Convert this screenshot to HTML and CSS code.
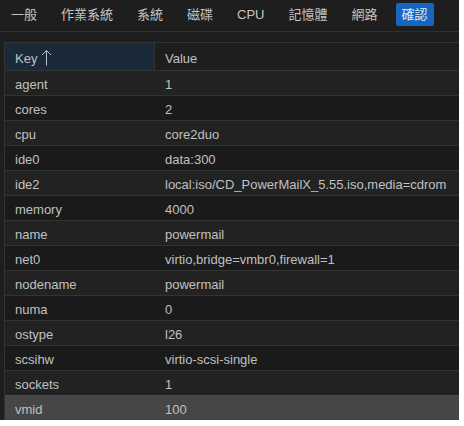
FILE: index.html
```html
<!DOCTYPE html>
<html lang="zh-Hant">
<head>
  <meta charset="UTF-8">
  <meta name="viewport" content="width=device-width, initial-scale=1.0">
  <title>確認</title>
  <link rel="stylesheet" href="styles.css">
</head>
<body>
  <div class="wizard">
    <div class="tabs">
      <div class="tab">一般</div>
      <div class="tab">作業系統</div>
      <div class="tab">系統</div>
      <div class="tab">磁碟</div>
      <div class="tab">CPU</div>
      <div class="tab">記憶體</div>
      <div class="tab">網路</div>
      <div class="tab active">確認</div>
    </div>

    <div class="grid">
      <div class="grid-head">
        <div class="col-key sorted">Key
          <svg class="arrow" width="11" height="17" viewBox="0 0 11 17">
            <path d="M5.5 1.5V16.5M1 6L5.5 1.5L10 6" fill="none" stroke="#b4bcc4" stroke-width="1"/>
          </svg>
        </div>
        <div class="col-value">Value</div>
      </div>
      <div class="row"><div class="col-key">agent</div><div class="col-value">1</div></div>
      <div class="row"><div class="col-key">cores</div><div class="col-value">2</div></div>
      <div class="row"><div class="col-key">cpu</div><div class="col-value">core2duo</div></div>
      <div class="row"><div class="col-key">ide0</div><div class="col-value">data:300</div></div>
      <div class="row"><div class="col-key">ide2</div><div class="col-value">local:iso/CD_PowerMailX_5.55.iso,media=cdrom</div></div>
      <div class="row"><div class="col-key">memory</div><div class="col-value">4000</div></div>
      <div class="row"><div class="col-key">name</div><div class="col-value">powermail</div></div>
      <div class="row"><div class="col-key">net0</div><div class="col-value">virtio,bridge=vmbr0,firewall=1</div></div>
      <div class="row"><div class="col-key">nodename</div><div class="col-value">powermail</div></div>
      <div class="row"><div class="col-key">numa</div><div class="col-value">0</div></div>
      <div class="row"><div class="col-key">ostype</div><div class="col-value">l26</div></div>
      <div class="row"><div class="col-key">scsihw</div><div class="col-value">virtio-scsi-single</div></div>
      <div class="row"><div class="col-key">sockets</div><div class="col-value">1</div></div>
      <div class="row selected"><div class="col-key">vmid</div><div class="col-value">100</div></div>
    </div>
  </div>
</body>
</html>
```

FILE: styles.css
```css
body {
  margin: 0;
  background-color: #ffffff;
  font-family: "Liberation Sans", "Noto Sans CJK TC", sans-serif;
  font-size: 13px;
  color: #c0c0c0;
}
.wizard {
  width: 459px;
  height: 420px;
  overflow: hidden;
  background-color: #1e1e1e;
}
.tabs {
  display: flex;
  gap: 12px;
  height: 32px;
  padding: 3px 0 0 5px;
  box-sizing: border-box;
  border-bottom: 1px solid #303030;
}
.tab {
  height: 23px;
  line-height: 23px;
  padding: 0 6px;
  border-radius: 2px;
  color: #c4c4c4;
}
.tab.active {
  background-color: #1766c2;
  color: #e4ecf6;
}
.grid {
  margin: 10px 0 0 4px;
  border-left: 1px solid #333333;
  border-top: 1px solid #333333;
}
.grid-head,
.row {
  display: flex;
  border-bottom: 1px solid #333333;
}
.grid-head {
  height: 27px;
}
.grid-head > div {
  padding-top: 4px;
  line-height: 23px;
}
.row {
  height: 24px;
  background-color: #222222;
}
.row > div {
  padding-top: 4px;
  line-height: 20px;
}
.row:nth-of-type(odd) {
  background-color: #1a1a1a;
}
.row.selected {
  background-color: #454545;
  background-image: radial-gradient(#4d4d4d 0.6px, transparent 0.8px);
  background-size: 3px 3px;
  border-top: 1px solid #4a4a4a;
  margin-top: -1px;
}
.col-key {
  width: 150px;
  padding-left: 10px;
  box-sizing: border-box;
}
.col-value {
  flex: 1;
  padding-left: 10px;
  white-space: nowrap;
}
.grid-head .col-key {
  display: flex;
  align-items: center;
  gap: 4px;
  padding-top: 3px;
  border-right: 1px solid #333333;
}
.sorted {
  background-color: #1b2a38;
}
.arrow {
  margin-top: -2px;
}
```
